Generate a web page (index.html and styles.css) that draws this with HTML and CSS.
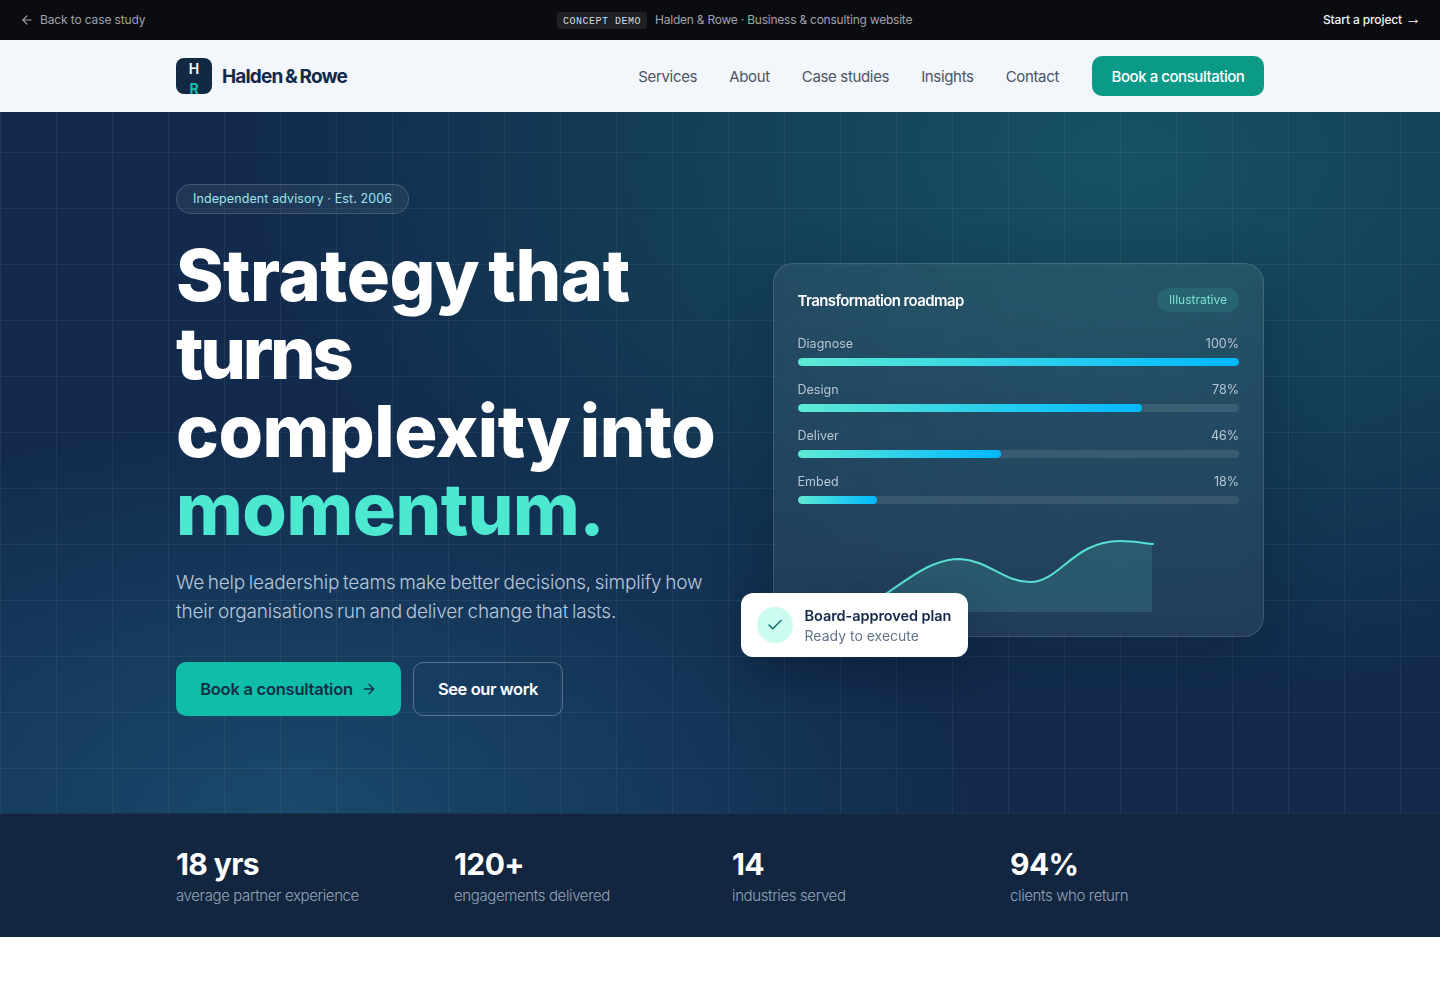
FILE: index.html
```html
<!DOCTYPE html>
<html lang="en">
<head>
<meta charset="utf-8">
<title>Halden &amp; Rowe</title>
<link rel="stylesheet" href="styles.css">
</head>
<body>
<div class="topbar">
  <a class="back"><svg class="back-icon" viewBox="0 0 24 24" fill="none" stroke="currentColor" stroke-width="2" stroke-linecap="round" stroke-linejoin="round"><path d="M19 12H5"/><path d="M12 19l-7-7 7-7"/></svg><span class="top-text">Back to case study</span></a>
  <div class="demo"><span class="demo-tag">CONCEPT DEMO</span><span class="demo-text">Halden &amp; Rowe · Business &amp; consulting website</span></div>
  <a class="start"><span class="top-text">Start a project <span class="start-arrow">→</span></span></a>
</div>
<header class="nav">
  <div class="wrap nav-inner">
    <a class="brand"><span class="logo"><span class="logo-h">H</span><span class="logo-r">R</span></span><span class="brand-name">Halden &amp; Rowe</span></a>
    <nav class="links">
      <a>Services</a><a>About</a><a>Case studies</a><a>Insights</a><a>Contact</a>
      <a class="nav-cta">Book a consultation</a>
    </nav>
  </div>
</header>
<section class="hero">
  <div class="wrap hero-grid">
    <div class="hero-copy">
      <span class="pill">Independent advisory · Est. 2006</span>
      <h1>Strategy that<br><span class="tight">turns</span><br>complexity into<br><em>momentum.</em></h1>
      <p class="lead">We help leadership teams make better decisions, simplify how<br>their organisations run and deliver change that lasts.</p>
      <div class="actions">
        <a class="btn btn-primary">Book a consultation<svg class="btn-icon" viewBox="0 0 24 24" fill="none" stroke="currentColor" stroke-width="2" stroke-linecap="round" stroke-linejoin="round"><path d="M5 12h14"/><path d="M12 5l7 7-7 7"/></svg></a>
        <a class="btn btn-ghost">See our work</a>
      </div>
    </div>
    <div class="card">
      <div class="card-head"><span class="card-title">Transformation roadmap</span><span class="badge">Illustrative</span></div>
      <div class="rows">
        <div class="row"><div class="row-label"><span>Diagnose</span><span>100%</span></div><div class="track"><div class="fill" style="width:100%"></div></div></div>
        <div class="row"><div class="row-label"><span>Design</span><span>78%</span></div><div class="track"><div class="fill" style="width:78%"></div></div></div>
        <div class="row"><div class="row-label"><span>Deliver</span><span>46%</span></div><div class="track"><div class="fill" style="width:46%"></div></div></div>
        <div class="row"><div class="row-label"><span>Embed</span><span>18%</span></div><div class="track"><div class="fill" style="width:18%"></div></div></div>
      </div>
      <svg class="chart" viewBox="0 0 441 88" width="441" height="88">
        <path class="chart-area" d="M52 88C90 78 120 35 162 35C190 36 205 58 232 58C262 58 275 17 322 17C335 17 345 19 354 20V88Z"/>
        <path class="chart-line" d="M52 88C90 78 120 35 162 35C190 36 205 58 232 58C262 58 275 17 322 17C335 17 345 19 355 20"/>
      </svg>
      <div class="toast">
        <span class="toast-icon"><svg viewBox="0 0 24 24" fill="none" stroke="currentColor" stroke-width="2" stroke-linecap="round" stroke-linejoin="round"><path d="M20 6L9 17l-5-5"/></svg></span>
        <div class="toast-text"><div class="toast-title">Board-approved plan</div><div class="toast-sub">Ready to execute</div></div>
      </div>
    </div>
  </div>
</section>
<section class="stats">
  <div class="wrap stats-grid">
    <div><div class="stat-num">18 yrs</div><div class="stat-label">average partner experience</div></div>
    <div><div class="stat-num">120+</div><div class="stat-label">engagements delivered</div></div>
    <div><div class="stat-num">14</div><div class="stat-label">industries served</div></div>
    <div><div class="stat-num">94%</div><div class="stat-label">clients who return</div></div>
  </div>
</section>
</body>
</html>
```
FILE: styles.css
```css
* { box-sizing: border-box; }
html, body { margin: 0; padding: 0; }
body { background: #fff; font-family: "Inter", "Liberation Sans", sans-serif; color: #12294a; }
a { color: inherit; text-decoration: none; }
.wrap { width: 1088px; margin: 0 auto; }

.topbar { height: 40px; background: #0b0c0f; display: flex; align-items: center; justify-content: space-between; padding: 0 20px; font-size: 12px; color: #a1a1aa; position: relative; }
.back { display: flex; align-items: center; gap: 6px; }
.back-icon { width: 14px; height: 14px; }
.top-text { display: block; margin-bottom: 2px; letter-spacing: -.13px; white-space: nowrap; }
.demo { position: absolute; left: 557px; top: 0; height: 40px; display: flex; align-items: center; gap: 8px; }
.demo-tag { font-family: "Liberation Mono", monospace; font-size: 10px; letter-spacing: .5px; background: #1f2023; color: #d9d9de; border-radius: 3px; padding: 0 6px; height: 17px; line-height: 19px; margin-top: 1px; }
.demo-text { margin-bottom: 2px; letter-spacing: -.23px; }
.start { color: #f4f4f5; font-weight: 500; white-space: nowrap; }
.start-arrow { font-family: "Liberation Sans", sans-serif; font-weight: 400; font-size: 16px; line-height: 12px; margin-right: -1px; }

.nav { height: 72px; background: #f3f6fa; }
.nav-inner { height: 72px; display: flex; align-items: center; justify-content: space-between; }
.brand { display: flex; align-items: center; gap: 10px; }
.logo { width: 36px; height: 36px; border-radius: 8px; background: #122944; overflow: hidden; display: block; text-align: center; font-size: 14px; font-weight: 700; line-height: 20px; padding-top: 1px; }
.logo-h, .logo-r { display: block; }
.logo-h { color: #fff; font-weight: 600; }
.logo-r { color: #14bfae; }
.brand-name { font-size: 19px; font-weight: 700; letter-spacing: -.85px; word-spacing: -1px; color: #12294a; }
.links { display: flex; align-items: center; gap: 32px; font-size: 15px; color: #4b5563; letter-spacing: -.0225em; }
.nav-cta { height: 40px; width: 172px; margin-left: 1px; border-radius: 10px; background: #0b9a87; color: #fff; font-weight: 500; display: flex; align-items: center; justify-content: center; letter-spacing: -.03em; }

.hero { height: 701px; padding-top: 72px; color: #fff; position: relative;
  background-color: #122b4d;
  background-image:
    linear-gradient(rgba(255,255,255,.06) 1px, transparent 1px),
    linear-gradient(90deg, rgba(255,255,255,.06) 1px, transparent 1px),
    radial-gradient(1150px 720px at 78% 6%, rgba(22,90,102,.82), transparent 76%),
    radial-gradient(900px 520px at 20% 100%, rgba(28,84,120,.72), transparent 76%);
  background-size: 56px 56px, 56px 56px, 100% 100%, 100% 100%;
  background-position: 0 40px, 0 0, 0 0, 0 0;
}
.hero-grid { display: grid; grid-template-columns: 1.1fr 1fr; gap: 56px; align-items: center; }
.pill { display: inline-block; height: 30px; line-height: 28px; padding: 0 16px; border: 1px solid rgba(255,255,255,.16); background: rgba(255,255,255,.06); border-radius: 15px; font-size: 12.500px; letter-spacing: .1px; color: #9ce6ea; vertical-align: top; }
h1 { margin: 22px 0 0; font-size: 72px; line-height: 78px; font-weight: 800; letter-spacing: -.47px; word-spacing: -6px; color: #fff; white-space: nowrap; }
h1 em { font-style: normal; color: #4ce9d0; }
.tight { letter-spacing: -.045em; }
.lead { margin: 20px 0 0; font-size: 19px; line-height: 29px; color: #b9c7d9; letter-spacing: -.01em; word-spacing: -1.4px; font-weight: 300; white-space: nowrap; }
.actions { display: flex; gap: 12px; margin-top: 36px; }
.btn { height: 54px; border-radius: 10px; display: flex; align-items: center; justify-content: center; font-size: 16.500px; font-weight: 600; letter-spacing: -.015em; }
.btn-primary { width: 225px; background: #10bda8; color: #0f2f47; gap: 8px; }
.btn-icon { width: 16px; height: 16px; }
.btn-ghost { width: 150px; border: 1px solid rgba(255,255,255,.28); color: #fff; letter-spacing: -.025em; }

.card { position: relative; padding: 24px; border: 1px solid rgba(255,255,255,.13); border-radius: 20px; background: rgba(255,255,255,.065); backdrop-filter: blur(10px); box-shadow: 0 24px 60px rgba(6,20,40,.28); }
.card-head { display: flex; justify-content: space-between; align-items: center; height: 24px; }
.card-title { font-size: 15px; font-weight: 600; color: #fff; letter-spacing: -.04em; }
.badge { height: 24px; line-height: 24px; padding: 0 12px; border-radius: 12px; background: rgba(76,233,208,.12); color: #7fdfd4; font-size: 12px; }
.rows { margin-top: 22px; display: flex; flex-direction: column; gap: 14px; }
.row-label { display: flex; justify-content: space-between; height: 18px; padding-top: 1px; line-height: 18px; font-size: 12.500px; color: #b8c6d4; margin-bottom: 6px; }
.track { height: 8px; border-radius: 4px; background: rgba(255,255,255,.1); overflow: hidden; }
.fill { height: 8px; border-radius: 4px; background: linear-gradient(90deg, #5eead4, #00b8ff); }
.chart { display: block; margin-top: 20px; }
.chart-area { fill: rgba(94,234,212,.14); }
.chart-line { fill: none; stroke: #58dfd0; stroke-width: 2; stroke-linecap: round; }

.toast { position: absolute; left: -33px; bottom: -21px; width: 227px; height: 64px; background: #fff; border-radius: 12px; display: flex; align-items: center; gap: 12px; padding: 0 16px; box-shadow: 0 16px 40px rgba(6,20,40,.28); white-space: nowrap; }
.toast-icon { width: 36px; height: 36px; flex: none; border-radius: 50%; background: #ccfbf1; color: #0f766e; display: flex; align-items: center; justify-content: center; }
.toast-icon svg { width: 18px; height: 18px; }
.toast-text { padding-top: 2px; }
.toast-title { font-size: 14.500px; line-height: 20px; font-weight: 600; color: #12294a; letter-spacing: -.005em; }
.toast-sub { font-size: 14px; line-height: 20px; color: #64748b; }

.stats { height: 124px; background: #12263f; border-top: 1px solid #1b3450; padding-top: 31px; }
.stats-grid { display: grid; grid-template-columns: repeat(4, 1fr); gap: 24px; }
.stat-num { font-size: 30px; line-height: 38px; font-weight: 700; color: #fff; letter-spacing: -.02em; }
.stat-label { margin-top: 4px; font-size: 15px; line-height: 18px; color: #94a3b8; letter-spacing: -.025em; font-weight: 300; }
```
